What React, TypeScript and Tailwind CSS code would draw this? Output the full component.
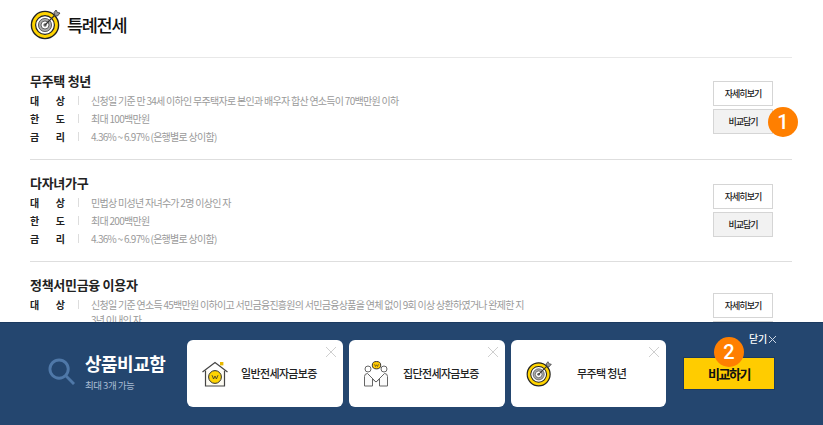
import React from 'react';

const font = { fontFamily: '"Noto Sans CJK KR", "Noto Sans", sans-serif' };

const TargetIcon = ({ className }: { className: string }) => (
  <svg viewBox="0 0 32 32" className={className} fill="none">
    <circle cx="15" cy="17" r="13.6" fill="#ffd400" stroke="#222" strokeWidth="1.4" />
    <circle cx="15" cy="17" r="9.4" fill="#fff" stroke="#222" strokeWidth="1.2" />
    <circle cx="15" cy="17" r="6.6" fill="#a9a9a9" stroke="#444" strokeWidth="0.8" />
    <circle cx="15" cy="17" r="4" fill="#fff" stroke="#444" strokeWidth="0.8" />
    <circle cx="15" cy="17" r="1.7" fill="#666" />
    <path d="M15 17 L26 6" stroke="#333" strokeWidth="1.2" />
    <path d="M24 4.5 L26 2 L27.5 4.5 L30 5 L27.5 8 L25 8 Z" fill="#999" stroke="#333" strokeWidth="0.8" />
  </svg>
);

const HouseIcon = ({ className }: { className: string }) => (
  <svg viewBox="0 0 26 26" className={className} fill="none">
    <path d="M0.5 11 L13 1.5 L25.5 11" stroke="#444" strokeWidth="1.2" />
    <path d="M3.5 9.5 V25 H22.5 V9.5" fill="#fdfbf2" stroke="#444" strokeWidth="1.2" />
    <rect x="18" y="1" width="3.4" height="3.4" fill="#e8b800" />
    <circle cx="13" cy="16" r="6.4" fill="#ffd400" stroke="#333" strokeWidth="1" />
    <path d="M10 14.2 L11.6 18 L13 15 L14.4 18 L16 14.2" stroke="#333" strokeWidth="0.8" />
  </svg>
);

const PeopleIcon = ({ className }: { className: string }) => (
  <svg viewBox="0 0 26 26" className={className} fill="none" stroke="#666" strokeWidth="1">
    <circle cx="5" cy="8" r="3" />
    <circle cx="21" cy="8" r="3" />
    <path d="M1.5 25 V15.5 Q1.5 12.5 4.5 12.5 L13 21 L21.5 12.5 Q24.5 12.5 24.5 15.5 V25 H16.5 V18 L13 21 L9.5 18 V25 Z" fill="#fbfbfb" />
    <ellipse cx="13.5" cy="4.2" rx="4.2" ry="3.7" fill="#ffc800" stroke="#333" />
    <path d="M11.5 3.2 L12.5 5.5 L13.5 3.8 L14.5 5.5 L15.5 3.2" stroke="#333" strokeWidth="0.6" />
  </svg>
);

const Badge = ({ n, className }: { n: number; className: string }) => (
  <span
    className={`absolute flex h-[30px] w-[30px] items-center justify-center rounded-full bg-[#ff7f00] text-[20px] font-medium text-white ${className}`}
    style={{ fontFamily: 'Roboto, sans-serif' }}
  >
    {n}
  </span>
);

const Row = ({ label, value }: { label: [string, string]; value: React.ReactNode }) => (
  <div className="flex items-start pb-[3px] leading-[15px]">
    <div className="flex w-[48px] shrink-0 justify-between pr-[13px] text-[10px] font-bold text-[#222]">
      <span>{label[0]}</span>
      <span>{label[1]}</span>
    </div>
    <span className="mt-[3px] h-[9px] w-px shrink-0 bg-[#ddd]" />
    <div className="ml-[12px] w-[436px] text-[10px] tracking-[-0.72px] text-[#9a9a9a]">{value}</div>
  </div>
);

const Item = ({
  title,
  rows,
  buttonTop,
}: {
  title: string;
  rows: { label: [string, string]; value: string }[];
  buttonTop: string;
}) => (
  <section className="box-border flex h-[102px] justify-between border-b border-[#dedede] pr-[19px]">
    <div className="pt-[13px]">
      <h3 className="mb-[2px] h-[20px] text-[13px] font-bold leading-[20px] tracking-[-0.3px] text-[#222]">{title}</h3>
      {rows.map((r) => (
        <Row key={r.label[0]} label={r.label} value={r.value} />
      ))}
    </div>
    <div className={`flex flex-col gap-[3px] ${buttonTop}`}>
      <button className="h-[25px] w-[60px] border border-[#d5d5d5] bg-white text-[9px] font-medium tracking-[-1px] text-[#222]">자세히보기</button>
      <button className="h-[25px] w-[60px] border border-[#d5d5d5] bg-[#f2f2f2] text-[9px] font-medium tracking-[-1px] text-[#222]">비교담기</button>
    </div>
  </section>
);

const Card = ({
  icon,
  label,
  className,
}: {
  icon: React.ReactNode;
  label: string;
  className: string;
}) => (
  <div className={`relative flex h-[67px] items-center rounded-[6px] bg-white ${className}`}>
    {icon}
    <span className="text-[11px] font-medium tracking-[-0.65px] text-[#222]">{label}</span>
    <svg viewBox="0 0 10 10" className="absolute right-[7px] top-[7px] h-[10px] w-[10px]" stroke="#cfcfcf" strokeWidth="1">
      <path d="M0 0 L10 10 M10 0 L0 10" />
    </svg>
  </div>
);

export default function App() {
  return (
    <div className="relative h-[425px] w-[823px] overflow-hidden bg-white" style={font}>
      <div className="mx-[30px] w-[762px]">
        <header className="box-border flex h-[58px] items-start border-b border-[#e8e8e8] pt-[8px]">
          <TargetIcon className="h-[32px] w-[32px]" />
          <h2 className="ml-[5px] text-[17.5px] font-medium leading-[34px] tracking-[-1.3px] text-[#111]">특례전세</h2>
        </header>
        <Item
          title="무주택 청년"
          buttonTop="pt-[23px]"
          rows={[
            { label: ['대', '상'], value: '신청일 기준 만 34세 이하인 무주택자로 본인과 배우자 합산 연소득이 70백만원 이하' },
            { label: ['한', '도'], value: '최대 100백만원' },
            { label: ['금', '리'], value: '4.36% ~ 6.97% (은행별로 상이함)' },
          ]}
        />
        <Item
          title="다자녀가구"
          buttonTop="pt-[24px]"
          rows={[
            { label: ['대', '상'], value: '민법상 미성년 자녀수가 2명 이상인 자' },
            { label: ['한', '도'], value: '최대 200백만원' },
            { label: ['금', '리'], value: '4.36% ~ 6.97% (은행별로 상이함)' },
          ]}
        />
        <Item
          title="정책서민금융 이용자"
          buttonTop="pt-[31px]"
          rows={[
            {
              label: ['대', '상'],
              value: '신청일 기준 연소득 45백만원 이하이고 서민금융진흥원의 서민금융상품을 연체 없이 9회 이상 상환하였거나 완제한 지 3년 이내인 자',
            },
          ]}
        />
      </div>

      <Badge n={1} className="left-[768px] top-[107px]" />

      <div className="absolute inset-x-0 bottom-0 flex h-[103px] items-start border-t border-[#1b3a60] bg-[#24466f] pl-[48px]">
        <svg viewBox="0 0 28 28" className="mt-[35px] h-[27px] w-[27px]" fill="none" stroke="#4f78a8" strokeWidth="3">
          <circle cx="11.5" cy="11.5" r="9.5" />
          <path d="M18.5 18.5 L27 27" />
        </svg>
        <div className="ml-[10px] w-[102px] pt-[27px]">
          <div className="text-[18px] font-bold leading-[26px] tracking-[-0.5px] text-white">상품비교함</div>
          <div className="mt-[2px] text-[9.5px] leading-[14px] tracking-[-0.5px] text-[#a9bcd3]">최대 3개 가능</div>
        </div>
        <div className="mt-[17px] flex gap-[6px]">
          <Card className="w-[156px]" icon={<HouseIcon className="ml-[15px] mr-[13px] h-[26px] w-[26px]" />} label="일반전세자금보증" />
          <Card className="w-[156px]" icon={<PeopleIcon className="ml-[14px] mr-[14px] h-[26px] w-[26px]" />} label="집단전세자금보증" />
          <Card className="w-[155px]" icon={<TargetIcon className="ml-[15px] mr-[24px] h-[27px] w-[27px]" />} label="무주택 청년" />
        </div>
        <button className="ml-[17px] mt-[34px] h-[33px] w-[92px] border border-[#1b3a60] bg-[#ffcc00] text-[13px] font-bold tracking-[-1.5px] text-[#111]">비교하기</button>
        <div className="absolute left-[749px] top-[9px] flex items-center text-[10px] font-medium leading-[14px] tracking-[-0.3px] text-white">
          <span>닫기</span>
          <svg viewBox="0 0 7 7" className="ml-[2px] h-[7px] w-[7px]" stroke="#cbd6e4" strokeWidth="1">
            <path d="M0 0 L7 7 M7 0 L0 7" />
          </svg>
        </div>
        <Badge n={2} className="left-[714px] top-[14px]" />
      </div>
    </div>
  );
}
